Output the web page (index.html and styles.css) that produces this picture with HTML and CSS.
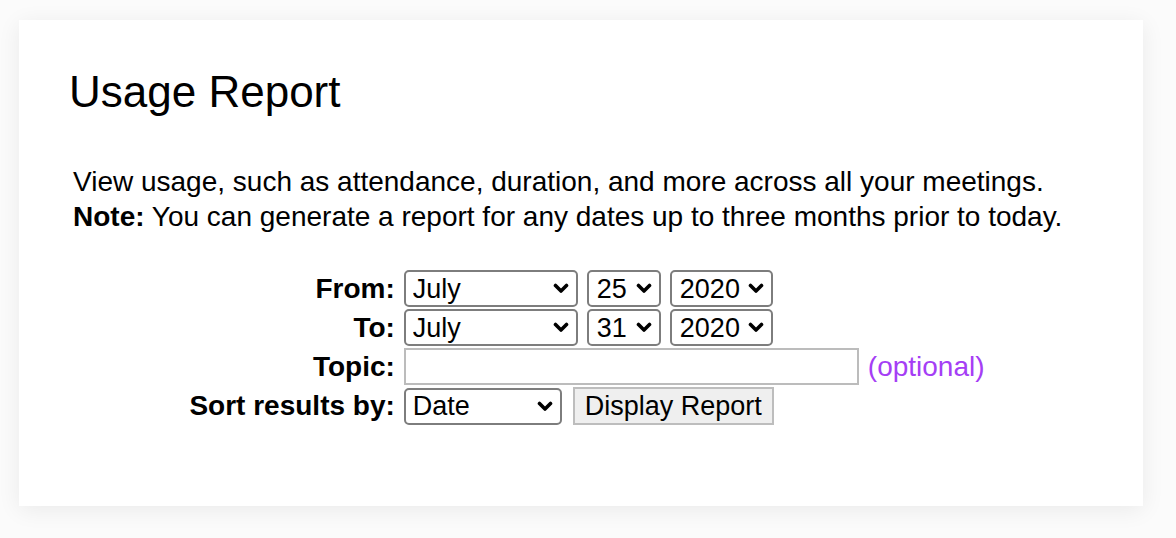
FILE: index.html
```html
<!DOCTYPE html>
<html>
<head>
<meta charset="utf-8">
<link rel="stylesheet" href="styles.css">
</head>
<body>
<div class="card">
  <h1 class="title">Usage Report</h1>
  <p class="intro">View usage, such as attendance, duration, and more across all your meetings.<br><b>Note:</b> You can generate a report for any dates up to three months prior to today.</p>
  <form class="form">
    <label class="lbl">From:</label>
    <div class="ctrls">
      <span class="sel sel-month"><select><option>July</option></select><svg class="chev" viewBox="0 0 16 11"><path d="M2.5 2.5 L8 8 L13.5 2.5" fill="none" stroke="#000" stroke-width="3.6" stroke-linecap="round" stroke-linejoin="round"/></svg></span>
      <span class="sel sel-day"><select><option>25</option></select><svg class="chev" viewBox="0 0 16 11"><path d="M2.5 2.5 L8 8 L13.5 2.5" fill="none" stroke="#000" stroke-width="3.6" stroke-linecap="round" stroke-linejoin="round"/></svg></span>
      <span class="sel sel-year"><select><option>2020</option></select><svg class="chev" viewBox="0 0 16 11"><path d="M2.5 2.5 L8 8 L13.5 2.5" fill="none" stroke="#000" stroke-width="3.6" stroke-linecap="round" stroke-linejoin="round"/></svg></span>
    </div>
    <label class="lbl">To:</label>
    <div class="ctrls">
      <span class="sel sel-month"><select><option>July</option></select><svg class="chev" viewBox="0 0 16 11"><path d="M2.5 2.5 L8 8 L13.5 2.5" fill="none" stroke="#000" stroke-width="3.6" stroke-linecap="round" stroke-linejoin="round"/></svg></span>
      <span class="sel sel-day"><select><option>31</option></select><svg class="chev" viewBox="0 0 16 11"><path d="M2.5 2.5 L8 8 L13.5 2.5" fill="none" stroke="#000" stroke-width="3.6" stroke-linecap="round" stroke-linejoin="round"/></svg></span>
      <span class="sel sel-year"><select><option>2020</option></select><svg class="chev" viewBox="0 0 16 11"><path d="M2.5 2.5 L8 8 L13.5 2.5" fill="none" stroke="#000" stroke-width="3.6" stroke-linecap="round" stroke-linejoin="round"/></svg></span>
    </div>
    <label class="lbl">Topic:</label>
    <div class="ctrls">
      <input class="topic" type="text">
      <span class="optional">(optional)</span>
    </div>
    <label class="lbl">Sort results by:</label>
    <div class="ctrls">
      <span class="sel sel-sort"><select><option>Date</option></select><svg class="chev" viewBox="0 0 16 11"><path d="M2.5 2.5 L8 8 L13.5 2.5" fill="none" stroke="#000" stroke-width="3.6" stroke-linecap="round" stroke-linejoin="round"/></svg></span>
      <button class="btn" type="button">Display Report</button>
    </div>
  </form>
</div>
</body>
</html>
```

FILE: styles.css
```css
html, body {
  margin: 0;
  padding: 0;
  background: #fbfbfb;
}
body {
  font-family: "Liberation Sans", Arial, sans-serif;
  color: #000;
  padding: 20px 33px 32px 19px;
}
.card {
  background: #fff;
  width: 1124px;
  height: 486px;
  box-sizing: border-box;
  padding: 47px 48px 0 50px;
  box-shadow: 0 4px 22px rgba(0, 0, 0, 0.07);
}
.title {
  margin: 0;
  font-size: 44px;
  font-weight: normal;
  line-height: 50px;
}
.intro {
  margin: 47px 0 0 4px;
  font-size: 28px;
  line-height: 35px;
}
.form {
  display: grid;
  grid-template-columns: auto auto;
  justify-content: center;
  column-gap: 9px;
  row-gap: 2px;
  margin: 36px 0 0 0;
  padding-left: 10px;
}
.lbl {
  font-weight: bold;
  font-size: 28px;
  line-height: 32px;
  text-align: right;
  align-self: center;
}
.ctrls {
  display: flex;
  align-items: center;
  gap: 9px;
}
.sel {
  position: relative;
  display: inline-block;
  height: 37px;
}
.sel select {
  appearance: none;
  -webkit-appearance: none;
  width: 100%;
  height: 37px;
  box-sizing: border-box;
  border: 2px solid #7d7d7d;
  border-radius: 5px;
  background: #fff;
  font-family: "Liberation Sans", Arial, sans-serif;
  font-size: 27px;
  color: #000;
  padding: 0 0 0 7px;
  margin: 0;
}
.chev {
  position: absolute;
  right: 9px;
  top: 13px;
  width: 16px;
  height: 11px;
  pointer-events: none;
}
.sel-month { width: 174px; }
.sel-day { width: 74px; }
.sel-year { width: 103px; }
.sel-sort { width: 158px; }
.sel-day select, .sel-year select { padding-left: 8px; }
.topic {
  width: 455px;
  height: 37px;
  box-sizing: border-box;
  border: 2px solid #bcbcbc;
  border-radius: 0;
  margin: 0;
  padding: 0 6px;
  font-size: 27px;
  font-family: "Liberation Sans", Arial, sans-serif;
  background: #fff;
}
.optional {
  font-size: 28px;
  line-height: 32px;
  color: #a53ef5;
}
.btn {
  height: 38px;
  width: 201px;
  box-sizing: border-box;
  margin: 0 0 0 2px;
  border: 2px solid #bdbdbd;
  border-radius: 0;
  background: #efefef;
  font-family: "Liberation Sans", Arial, sans-serif;
  font-size: 27px;
  color: #000;
  padding: 0;
  white-space: nowrap;
}
```
